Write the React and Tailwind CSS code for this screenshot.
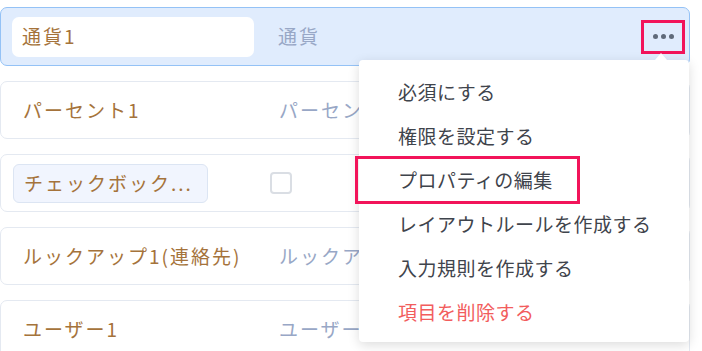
import React from "react";

const font = { fontFamily: '"Noto Sans CJK JP", "Noto Sans", sans-serif' };

const rows = [
  { label: "パーセント1", type: "パーセント" },
  { label: "チェックボック...", chip: true },
  { label: "ルックアップ1(連絡先)", type: "ルックアップ" },
  { label: "ユーザー1", type: "ユーザー" },
];

const menuItems = [
  "必須にする",
  "権限を設定する",
  "プロパティの編集",
  "レイアウトルールを作成する",
  "入力規則を作成する",
];

const App = () => {
  return (
    <div
      className="relative w-[702px] h-[351px] overflow-hidden bg-white"
      style={font}
    >
      <div className="flex flex-col gap-[15px] pt-[7px] w-[690px]">
        {/* selected row */}
        <div className="flex items-center h-[59px] pl-[11px] pr-[4px] rounded-[7px] border border-[#94c2f6] bg-[#e0ecfd]">
          <div className="flex items-center w-[242px] h-[40px] pl-[10px] rounded-[7px] bg-white text-[19px] tracking-[2px] text-[#a5733b]">
            通貨1
          </div>
          <div className="flex-1 pl-[24px] text-[19px] tracking-[2px] text-[#98a7c6]">
            通貨
          </div>
          <div className="flex items-center justify-center w-[44px] h-[34px] border-[3px] border-[#f2145a]">
            <span className="flex gap-[3px]">
              <span className="w-[5px] h-[5px] rounded-full bg-[#5f6a7a]" />
              <span className="w-[5px] h-[5px] rounded-full bg-[#5f6a7a]" />
              <span className="w-[5px] h-[5px] rounded-full bg-[#5f6a7a]" />
            </span>
          </div>
        </div>

        {rows.map((r) => (
          <div
            key={r.label}
            className="flex items-center h-[58px] pl-[12px] rounded-[7px] border border-[#e4e9f1] bg-white"
          >
            <div className="w-[242px] flex items-center">
              {r.chip ? (
                <div className="flex items-center w-[195px] h-[39px] pl-[10px] rounded-[6px] border border-[#dce5f3] bg-[#f1f5fe] text-[19px] tracking-[2px] text-[#a5733b]">
                  {r.label}
                </div>
              ) : (
                <div className="pl-[10px] text-[19px] tracking-[2px] text-[#a5733b] whitespace-nowrap">
                  {r.label}
                </div>
              )}
            </div>
            {r.chip ? (
              <div className="ml-[15px] w-[22px] h-[22px] rounded-[4px] border-2 border-[#dadee4] bg-white" />
            ) : (
              <div className="pl-[24px] text-[19px] tracking-[2px] text-[#98a7c6] whitespace-nowrap">
                {r.type}
              </div>
            )}
          </div>
        ))}
      </div>

      {/* dropdown menu */}
      <div className="absolute left-[359px] top-[60px] w-[330px] pt-[10px] pb-[8px] rounded-[4px] bg-white shadow-[0_3px_12px_rgba(0,0,0,0.14)]">
        <div className="absolute -top-[7px] left-[296px] w-0 h-0 border-l-[6px] border-r-[6px] border-b-[7px] border-l-transparent border-r-transparent border-b-white" />
        {menuItems.map((m) => (
          <div
            key={m}
            className="flex items-center h-[44px] pl-[39px] text-[19px] tracking-[0.5px] text-[#3f444c]"
          >
            {m}
          </div>
        ))}
        <div className="flex items-center h-[44px] pl-[39px] text-[19px] tracking-[0.5px] text-[#f25d5d]">
          項目を削除する
        </div>
      </div>

      {/* highlight */}
      <div className="absolute left-[355px] top-[156px] w-[225px] h-[48px] border-[3px] border-[#f2145a]" />
    </div>
  );
};

export default App;
